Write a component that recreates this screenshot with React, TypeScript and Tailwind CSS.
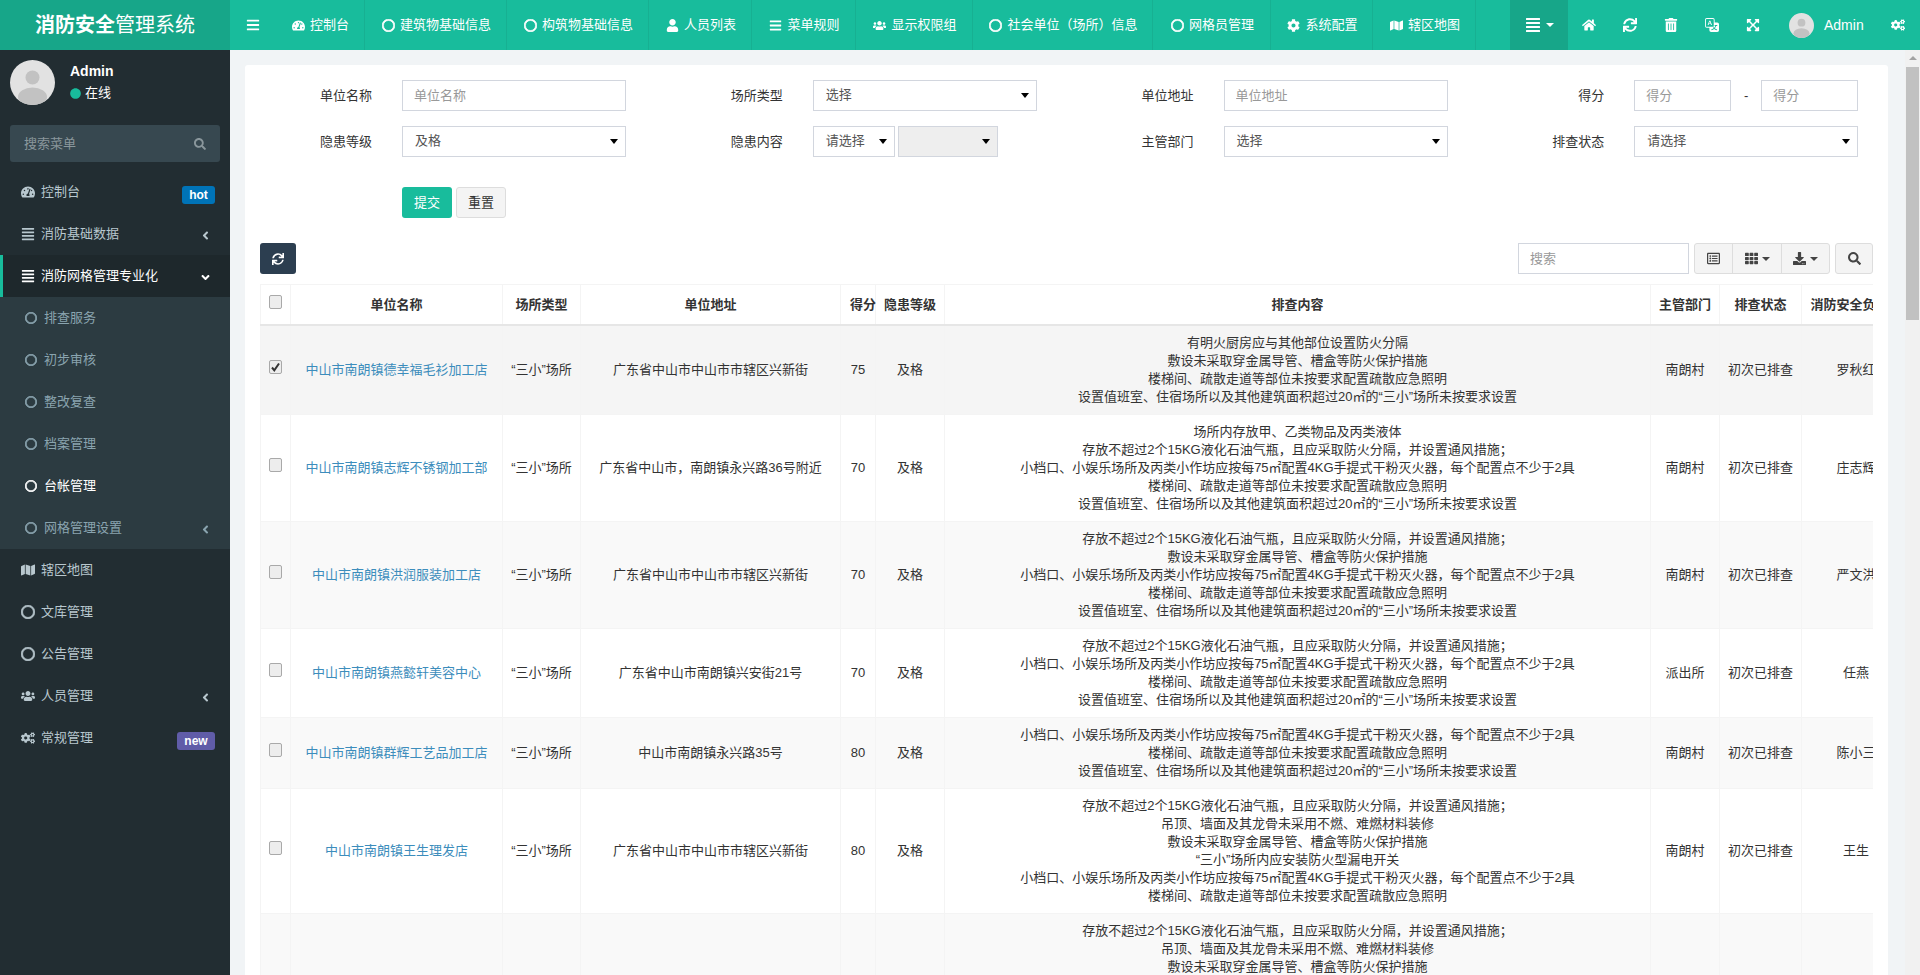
import {
  FaAlignJustify,
  FaAngleDown,
  FaAngleLeft,
  FaBars,
  FaCircle,
  FaCog,
  FaCogs,
  FaDownload,
  FaExpandArrowsAlt,
  FaHome,
  FaMap,
  FaRegCircle,
  FaRegListAlt,
  FaSearch,
  FaSync,
  FaTachometerAlt,
  FaTh,
  FaTrashAlt,
  FaUser,
  FaUsers,
} from "react-icons/fa";
import { BsTranslate } from "react-icons/bs";

const topNav = [
  { label: "控制台", icon: <FaTachometerAlt />, width: "w-[90px]" },
  { label: "建筑物基础信息", icon: <Ring />, width: "w-[142px]" },
  { label: "构筑物基础信息", icon: <Ring />, width: "w-[142px]" },
  { label: "人员列表", icon: <FaUser />, width: "w-[103px]" },
  { label: "菜单规则", icon: <FaBars />, width: "w-[104px]" },
  { label: "显示权限组", icon: <FaUsers />, width: "w-[117px]" },
  { label: "社会单位（场所）信息", icon: <Ring />, width: "w-[180px]" },
  { label: "网格员管理", icon: <Ring />, width: "w-[118px]" },
  { label: "系统配置", icon: <FaCog />, width: "w-[102px]" },
  { label: "辖区地图", icon: <FaMap />, width: "w-[103px]" },
];

const subMenu = ["排查服务", "初步审核", "整改复查", "档案管理", "台帐管理", "网格管理设置"];

const lines = {
  fire: "有明火厨房应与其他部位设置防火分隔",
  pipe: "敷设未采取穿金属导管、槽盒等防火保护措施",
  exit: "楼梯间、疏散走道等部位未按要求配置疏散应急照明",
  duty: "设置值班室、住宿场所以及其他建筑面积超过20㎡的“三小”场所未按要求设置",
  goods: "场所内存放甲、乙类物品及丙类液体",
  gas: "存放不超过2个15KG液化石油气瓶，且应采取防火分隔，并设置通风措施；",
  ext: "小档口、小娱乐场所及丙类小作坊应按每75㎡配置4KG手提式干粉灭火器，每个配置点不少于2具",
  roof: "吊顶、墙面及其龙骨未采用不燃、难燃材料装修",
  leak: "“三小”场所内应安装防火型漏电开关",
};

const addrA = "广东省中山市中山市市辖区兴新街";

const rows = [
  { name: "中山市南朗镇德幸福毛衫加工店", addr: addrA, score: 75, items: [lines.fire, lines.pipe, lines.exit, lines.duty], dept: "南朗村", owner: "罗秋红", checked: true },
  { name: "中山市南朗镇志辉不锈钢加工部", addr: "广东省中山市，南朗镇永兴路36号附近", score: 70, items: [lines.goods, lines.gas, lines.ext, lines.exit, lines.duty], dept: "南朗村", owner: "庄志辉" },
  { name: "中山市南朗镇洪润服装加工店", addr: addrA, score: 70, items: [lines.gas, lines.pipe, lines.ext, lines.exit, lines.duty], dept: "南朗村", owner: "严文洪" },
  { name: "中山市南朗镇燕懿轩美容中心", addr: "广东省中山市南朗镇兴安街21号", score: 70, items: [lines.gas, lines.ext, lines.exit, lines.duty], dept: "派出所", owner: "任燕" },
  { name: "中山市南朗镇群辉工艺品加工店", addr: "中山市南朗镇永兴路35号", score: 80, items: [lines.ext, lines.exit, lines.duty], dept: "南朗村", owner: "陈小三" },
  { name: "中山市南朗镇王生理发店", addr: addrA, score: 80, items: [lines.gas, lines.roof, lines.pipe, lines.leak, lines.ext, lines.exit], dept: "南朗村", owner: "王生" },
  { name: "中山市南朗镇永兴百货店", addr: addrA, score: 80, items: [lines.gas, lines.roof, lines.pipe, lines.leak, lines.ext, lines.exit, lines.duty, lines.goods], dept: "南朗村", owner: "李明" },
];

function Ring() {
  return <FaRegCircle className="[&_path]:stroke-current [&_path]:stroke-[30]" />;
}

function Avatar({ size }: { size: string }) {
  return (
    <svg viewBox="0 0 45 45" className={`${size} shrink-0`}>
      <clipPath id="avatar-clip">
        <circle cx="22.5" cy="22.5" r="22.5" />
      </clipPath>
      <g clipPath="url(#avatar-clip)">
        <rect width="45" height="45" fill="#e2e2e2" />
        <circle cx="22.5" cy="17.5" r="7" fill="#c2c2c2" />
        <ellipse cx="22.5" cy="37" rx="14.5" ry="9.5" fill="#c2c2c2" />
      </g>
    </svg>
  );
}

function Caret() {
  return <span className="w-0 h-0 border-x-[4px] border-t-[5px] border-x-transparent border-t-black" />;
}

function SmallCaret({ color }: { color: string }) {
  return <span className={`w-0 h-0 border-x-[4px] border-t-[4px] border-x-transparent ${color}`} />;
}

function TextInput({ placeholder, width = "w-[224px]" }: { placeholder: string; width?: string }) {
  return (
    <input
      placeholder={placeholder}
      className={`${width} h-[31px] px-[11px] border border-[#d2d6de] bg-white text-[13px] outline-none placeholder:text-[#999]`}
    />
  );
}

function SelectBox({ text, width = "w-[224px]", disabled }: { text?: string; width?: string; disabled?: boolean }) {
  return (
    <div className={`${width} h-[31px] pl-[12px] pr-[7px] flex items-center justify-between border border-[#d2d6de] text-[13px] text-[#555] ${disabled ? "bg-[#eeeeee]" : "bg-white"}`}>
      <span className="-mt-[2px]">{text}</span>
      <Caret />
    </div>
  );
}

function FormCell({ label, children }: { label: string; children: React.ReactNode }) {
  return (
    <div className="flex items-center">
      <label className="w-[127px] shrink-0 mr-[30px] text-right text-[13px] text-[#333]">{label}</label>
      {children}
    </div>
  );
}

function MenuRow({ icon, label, active, right }: { icon: React.ReactNode; label: string; active?: boolean; right?: React.ReactNode }) {
  return (
    <div className={`h-[42px] pl-[21px] pr-[15px] flex items-center text-[13px] ${active ? "bg-[#1e282c] text-white border-l-[3px] border-[#18bc9c] !pl-[18px]" : "text-[#b8c7ce]"}`}>
      <span className="w-[14px] text-[14px] flex justify-center">{icon}</span>
      <span className="ml-[6px] flex-1">{label}</span>
      {right}
    </div>
  );
}

function CheckBox({ checked }: { checked?: boolean }) {
  return (
    <span className="relative inline-flex w-[13px] h-[14px] -mt-[7px]">
      <input type="checkbox" readOnly checked={!!checked} className="appearance-none w-[13px] h-[14px] rounded-[2px] border border-[#a9a9a9] bg-[#ededed]" />
      {checked && (
        <svg viewBox="0 0 13 14" className="absolute inset-0 w-[13px] h-[14px]">
          <path d="M3 7.5l2.3 2.8L10 3.5" fill="none" stroke="#333" strokeWidth="2" />
        </svg>
      )}
    </span>
  );
}

export default function App() {
  const cell = "border border-[#f4f4f4] px-[8px] py-[8px] text-center align-middle";
  const th = "border border-[#f4f4f4] border-b-2 border-b-[#e6e6e6] h-[40px] p-0 text-center font-bold text-[13px] whitespace-nowrap";

  return (
    <div className="w-[1920px] h-[975px] overflow-hidden flex flex-col bg-[#f1f4f6] text-[13px] text-[#333] [font-family:'Liberation_Sans','Noto_Sans_CJK_SC',sans-serif]">
      <header className="h-[50px] shrink-0 flex items-stretch bg-[#18bc9c] text-white">
        <div className="w-[230px] bg-[#17a689] flex items-center justify-center text-[20px]">
          <b>消防安全</b>管理系统
        </div>
        <div className="w-[45px] flex items-center justify-center text-[14px]">
          <FaBars />
        </div>
        {topNav.map((item) => (
          <div key={item.label} className={`${item.width} pl-[2px] flex items-center justify-center gap-[5px] border-r border-[#17b092]`}>
            <span className="text-[13px]">{item.icon}</span>
            <span>{item.label}</span>
          </div>
        ))}
        <div className="w-[34px]" />
        <div className="w-[58px] bg-[#17a689] flex items-center justify-center gap-[5px]">
          <FaAlignJustify className="text-[16px]" />
          <SmallCaret color="border-t-white" />
        </div>
        {[<FaHome />, <FaSync />, <FaTrashAlt />, <BsTranslate />, <FaExpandArrowsAlt />].map((icon, i) => (
          <div key={i} className="w-[41px] flex items-center justify-center text-[14px]">
            {icon}
          </div>
        ))}
        <div className="w-[100px] pl-[16px] flex items-center gap-[10px] text-[14px]">
          <Avatar size="w-[25px] h-[25px]" />
          <span>Admin</span>
        </div>
        <div className="flex-1 flex items-center justify-center text-[14px] pl-[2px]">
          <FaCogs />
        </div>
      </header>

      <div className="flex-1 min-h-0 flex">
        <aside className="w-[230px] shrink-0 bg-[#222d32]">
          <div className="h-[75px] pl-[10px] pt-[10px] flex">
            <Avatar size="w-[45px] h-[45px]" />
            <div className="ml-[15px] text-white">
              <div className="font-bold text-[14px] leading-[18px] mt-[2px]">Admin</div>
              <div className="mt-[4px] flex items-center gap-[4px] text-[13px] leading-[18px]">
                <FaCircle className="text-[11px] text-[#18bc9c]" />
                在线
              </div>
            </div>
          </div>
          <div className="mx-[10px] h-[37px] px-[14px] flex items-center justify-between rounded-[3px] bg-[#374850] text-[13px] text-[#8a979c]">
            搜索菜单
            <FaSearch className="text-[12px]" />
          </div>
          <div className="mt-[9px]">
            <MenuRow
              icon={<FaTachometerAlt />}
              label="控制台"
              right={<span className="mt-[6px] w-[33px] h-[18px] flex items-center justify-center rounded-[3px] bg-[#0073b7] text-white text-[12px] font-bold">hot</span>}
            />
            <MenuRow icon={<FaAlignJustify />} label="消防基础数据" right={<FaAngleLeft className="text-[13px] mt-[3px] mr-[3px]" />} />
            <MenuRow icon={<FaAlignJustify />} label="消防网格管理专业化" active right={<FaAngleDown className="text-[13px] mt-[3px] mr-[3px]" />} />
            <div className="bg-[#2c3b41]">
              {subMenu.map((label) => (
                <div key={label} className={`h-[42px] pl-[25px] pr-[18px] flex items-center ${label === "台帐管理" ? "text-white" : "text-[#8aa4af]"}`}>
                  <span className="w-[12px] text-[12px]">
                    <Ring />
                  </span>
                  <span className="ml-[7px] flex-1">{label}</span>
                  {label === "网格管理设置" && <FaAngleLeft className="text-[13px] mt-[3px]" />}
                </div>
              ))}
            </div>
            <MenuRow icon={<FaMap />} label="辖区地图" />
            <MenuRow icon={<Ring />} label="文库管理" />
            <MenuRow icon={<Ring />} label="公告管理" />
            <MenuRow icon={<FaUsers />} label="人员管理" right={<FaAngleLeft className="text-[13px] mt-[3px] mr-[3px]" />} />
            <MenuRow
              icon={<FaCogs />}
              label="常规管理"
              right={<span className="mt-[6px] w-[38px] h-[18px] flex items-center justify-center rounded-[3px] bg-[#605ca8] text-white text-[12px] font-bold">new</span>}
            />
          </div>
        </aside>

        <main className="flex-1 min-w-0 overflow-hidden">
          <div className="ml-[15px] mr-[17px] mt-[15px] pt-[15px] bg-white rounded-[3px]">
            <div className="grid grid-cols-4 gap-y-[15px]">
              <FormCell label="单位名称">
                <TextInput placeholder="单位名称" />
              </FormCell>
              <FormCell label="场所类型">
                <SelectBox text="选择" />
              </FormCell>
              <FormCell label="单位地址">
                <TextInput placeholder="单位地址" />
              </FormCell>
              <FormCell label="得分">
                <TextInput placeholder="得分" width="w-[97px]" />
                <span className="w-[30px] text-center">-</span>
                <TextInput placeholder="得分" width="w-[97px]" />
              </FormCell>
              <FormCell label="隐患等级">
                <SelectBox text="及格" />
              </FormCell>
              <FormCell label="隐患内容">
                <div className="flex gap-[3px]">
                  <SelectBox text="请选择" width="w-[82px]" />
                  <SelectBox width="w-[100px]" disabled />
                </div>
              </FormCell>
              <FormCell label="主管部门">
                <SelectBox text="选择" />
              </FormCell>
              <FormCell label="排查状态">
                <SelectBox text="请选择" />
              </FormCell>
            </div>

            <div className="mt-[30px] ml-[157px] flex gap-[4px]">
              <button className="w-[50px] h-[31px] rounded-[3px] bg-[#18bc9c] text-white text-[13px]">提交</button>
              <button className="w-[50px] h-[31px] rounded-[3px] bg-[#f4f4f4] border border-[#dddddd] text-[#333] text-[13px]">重置</button>
            </div>

            <div className="mt-[25px] px-[15px] flex items-center">
              <button className="w-[36px] h-[31px] rounded-[3px] bg-[#2c3e50] text-white text-[12px] flex items-center justify-center">
                <FaSync />
              </button>
              <div className="flex-1" />
              <input placeholder="搜索" className="w-[171px] h-[31px] px-[11px] border border-[#d2d6de] text-[13px] outline-none placeholder:text-[#999]" />
              <div className="ml-[5px] h-[31px] flex rounded-[3px] border border-[#dddddd] bg-[#f4f4f4] text-[#444]">
                <div className="w-[37px] flex items-center justify-center text-[13px]">
                  <FaRegListAlt />
                </div>
                <div className="w-[49px] border-l border-[#dddddd] flex items-center justify-center gap-[4px] text-[13px]">
                  <FaTh />
                  <SmallCaret color="border-t-[#444]" />
                </div>
                <div className="w-[48px] border-l border-[#dddddd] flex items-center justify-center gap-[4px] text-[13px]">
                  <FaDownload />
                  <SmallCaret color="border-t-[#444]" />
                </div>
              </div>
              <div className="ml-[5px] w-[38px] h-[31px] rounded-[3px] border border-[#dddddd] bg-[#f4f4f4] text-[#444] text-[13px] flex items-center justify-center">
                <FaSearch />
              </div>
            </div>

            <div className="mt-[10px] mx-[15px] overflow-hidden">
              <table className="table-fixed w-[1650px] border-collapse">
                <colgroup>
                  <col className="w-[30px]" />
                  <col className="w-[212px]" />
                  <col className="w-[78px]" />
                  <col className="w-[260px]" />
                  <col className="w-[35px]" />
                  <col className="w-[69px]" />
                  <col className="w-[706px]" />
                  <col className="w-[69px]" />
                  <col className="w-[82px]" />
                  <col className="w-[109px]" />
                </colgroup>
                <thead>
                  <tr>
                    <th className={th}>
                      <CheckBox />
                    </th>
                    <th className={th}>单位名称</th>
                    <th className={th}>场所类型</th>
                    <th className={th}>单位地址</th>
                    <th className={`${th} !text-left !pl-[9px]`}>得分</th>
                    <th className={th}>隐患等级</th>
                    <th className={th}>排查内容</th>
                    <th className={th}>主管部门</th>
                    <th className={th}>排查状态</th>
                    <th className={th}>消防安全负责人</th>
                  </tr>
                </thead>
                <tbody className="leading-[18px]">
                  {rows.map((row, i) => (
                    <tr key={row.name} className={row.checked ? "bg-[#f5f5f5]" : i % 2 === 0 ? "bg-[#f9f9f9]" : "bg-white"}>
                      <td className={`${cell} !px-0`}>
                        <CheckBox checked={row.checked} />
                      </td>
                      <td className={`${cell} !px-0 text-[#3c8dbc]`}>{row.name}</td>
                      <td className={`${cell} !px-0`}>“三小”场所</td>
                      <td className={`${cell} !px-0`}>{row.addr}</td>
                      <td className={`${cell} !px-0`}>{row.score}</td>
                      <td className={`${cell} !px-0`}>及格</td>
                      <td className={cell}>
                        {row.items.map((line, j) => (
                          <div key={j}>{line}</div>
                        ))}
                      </td>
                      <td className={`${cell} !px-0`}>{row.dept}</td>
                      <td className={`${cell} !px-0`}>初次已排查</td>
                      <td className={`${cell} !px-0`}>{row.owner}</td>
                    </tr>
                  ))}
                </tbody>
              </table>
            </div>
          </div>
        </main>

        {/* page scrollbar */}
        <div className="w-[15px] shrink-0 flex flex-col items-center bg-[#f1f1f1]">
          <span className="mt-[6px] w-0 h-0 border-x-[4px] border-b-[4px] border-x-transparent border-b-[#a3a3a3]" />
          <div className="mt-[7px] w-[13px] h-[253px] bg-[#c1c1c1]" />
        </div>
      </div>
    </div>
  );
}
